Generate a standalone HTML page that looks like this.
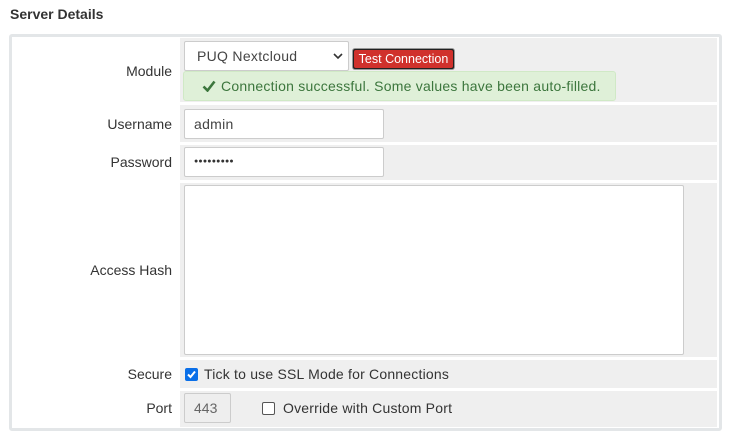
<!DOCTYPE html>
<html><head><style>
*{box-sizing:border-box;margin:0;padding:0}
body{width:732px;height:438px;background:#fff;font-family:"Liberation Sans",sans-serif;font-size:14px;color:#333;position:relative;overflow:hidden}
.a{position:absolute}
.lbl{position:absolute;left:12px;width:160px;text-align:right;font-size:14px;color:#333}
.f{position:absolute;left:180px;width:537px;background:#efefef}
.in{position:absolute;background:#fff;border:1px solid #ccc;border-radius:2px;font-size:14px;padding-left:9px;color:#444}
</style></head><body>
<div class="a" style="left:10px;top:6px;font-weight:bold;font-size:14px;color:#333">Server Details</div>
<div class="a" style="left:9px;top:34px;width:713px;height:397px;border:3px solid #e3e6e8;border-radius:3px"></div>

<div class="f" style="top:38px;height:64px"></div>
<div class="f" style="top:105px;height:37px"></div>
<div class="f" style="top:145px;height:35px"></div>
<div class="f" style="top:183px;height:174px"></div>
<div class="f" style="top:360px;height:28px"></div>
<div class="f" style="top:391px;height:36px"></div>

<div class="lbl" style="top:63px">Module</div>
<div class="lbl" style="top:116px">Username</div>
<div class="lbl" style="top:154px">Password</div>
<div class="lbl" style="top:262px">Access Hash</div>
<div class="lbl" style="top:366px">Secure</div>
<div class="lbl" style="top:400px">Port</div>

<div class="in" style="left:184px;top:41px;width:165px;height:30px;line-height:28px;padding-left:12px;letter-spacing:0.3px">PUQ Nextcloud
<svg class="a" style="left:148px;top:11px" width="10" height="7" viewBox="0 0 10 7"><path d="M1 1l4 4 4-4" stroke="#333" stroke-width="1.6" fill="none"/></svg></div>
<div class="a" style="left:352px;top:48px;width:103px;height:22px;background:#222;border-radius:3px;border:1px solid #999"></div>
<div class="a" style="left:354px;top:50px;width:99px;height:18px;background:#d0312c;color:#fff;font-size:12.5px;line-height:18px;text-align:center;border-radius:2px">Test Connection</div>
<div class="a" style="left:183px;top:71px;width:433px;height:30px;background:#dff0d8;border:1px solid #d0e9c6;border-radius:3px;color:#3c763d;line-height:28px;padding-left:37px;letter-spacing:0.23px">Connection successful. Some values have been auto-filled.
<svg class="a" style="left:18px;top:8px" width="14" height="12" viewBox="0 0 14 12"><path d="M1.5 6.5l4 4L12.5 1.5" stroke="#3c763d" stroke-width="2.6" fill="none"/></svg></div>

<div class="in" style="left:184px;top:109px;width:200px;height:30px;line-height:28px;letter-spacing:0.3px">admin</div>
<div class="in" style="left:184px;top:147px;width:200px;height:30px;line-height:27px;letter-spacing:0.2px;font-size:7px;color:#333">●●●●●●●●●</div>
<div class="in" style="left:184px;top:185px;width:500px;height:170px"></div>

<div class="a" style="left:185px;top:368px;width:13px;height:13px;background:#0a6fe8;border-radius:2px"><svg width="13" height="13" viewBox="0 0 13 13"><path d="M3 6.5l2.5 2.5L10 3.5" stroke="#fff" stroke-width="2" fill="none"/></svg></div>
<div class="a" style="left:204px;top:366px;letter-spacing:0.2px">Tick to use SSL Mode for Connections</div>

<div class="in" style="left:184px;top:393px;width:47px;height:30px;line-height:28px;background:#eee;color:#666">443</div>
<div class="a" style="left:262px;top:402px;width:13px;height:13px;border:1px solid #555;border-radius:2px;background:#fff"></div>
<div class="a" style="left:283px;top:400px;letter-spacing:0.2px">Override with Custom Port</div>
</body></html>
